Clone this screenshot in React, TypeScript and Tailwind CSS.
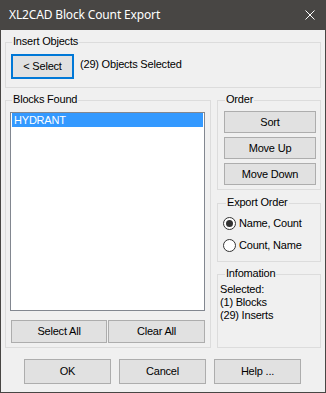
import { ReactNode } from 'react';

interface GroupProps {
  label: string;
  labelLeft: string;
  className: string;
  children?: ReactNode;
}

// Windows-style group box: thin light border with the caption sitting on the top edge
function Group({ label, labelLeft, className, children }: GroupProps) {
  return (
    <div className={`relative border border-[#dcdcdc] ${className}`}>
      <span
        className={`absolute top-[-8px] ${labelLeft} bg-[#f0f0f0] px-[1px] leading-[13px] whitespace-nowrap`}
      >
        {label}
      </span>
      {children}
    </div>
  );
}

interface ButtonProps {
  label: string;
  className: string;
}

function Button({ label, className }: ButtonProps) {
  return (
    <div
      className={`flex items-center justify-center bg-[#e1e1e1] border border-[#adadad] leading-[13px] whitespace-nowrap ${className}`}
    >
      {label}
    </div>
  );
}

function Radio({ label, checked }: { label: string; checked: boolean }) {
  return (
    <div className="flex items-center h-[13px]">
      <div className="w-[13px] h-[13px] rounded-full border border-[#333333] bg-white flex items-center justify-center">
        {checked && <div className="w-[7px] h-[7px] rounded-full bg-[#333333]" />}
      </div>
      <span className="ml-[3px] leading-[13px]">{label}</span>
    </div>
  );
}

export default function App() {
  return (
    <div className="w-[326px] h-[393px] bg-[#f0f0f0] border-x border-b border-[#484644] flex flex-col text-[11px] tracking-[-0.2px] text-black font-['Liberation_Sans',Arial,sans-serif]">
      {/* Title bar */}
      <div className="h-[30px] shrink-0 bg-[#484644] flex items-center justify-between">
        <span className="ml-[8px] text-white text-[12px] tracking-[-0.15px] font-['Noto_Sans',sans-serif]">
          XL2CAD Block Count Export
        </span>
        <svg width="10" height="10" viewBox="0 0 10 10" className="mr-[10px]">
          <path d="M0.5 0.5 L9.5 9.5 M9.5 0.5 L0.5 9.5" stroke="white" strokeWidth="1" />
        </svg>
      </div>

      <div className="flex flex-col px-[4px]">
        {/* Insert Objects */}
        <Group label="Insert Objects" labelLeft="left-[6px]" className="mt-[12px] w-[316px] h-[46px]">
          <div className="flex items-start pl-[5px] pt-[11px]">
            <div className="w-[63px] h-[25px] flex items-center justify-center bg-[#e1e1e1] border-2 border-[#0078d7] leading-[13px]">
              &lt; Select
            </div>
            <span className="ml-[6px] mt-[4px] leading-[13px]">(29) Objects Selected</span>
          </div>
        </Group>

        <div className="flex mt-[12px] gap-[6px]">
          {/* Blocks Found */}
          <Group label="Blocks Found" labelLeft="left-[6px]" className="w-[206px] h-[248px]">
            <div className="flex flex-col pl-[4px] pt-[11px]">
              <div className="w-[195px] h-[199px] border border-[#828790] bg-white">
                <div className="mx-[1px] h-[14px] bg-[#3399ff] text-white pl-[2px] leading-[14px]">
                  HYDRANT
                </div>
              </div>
              <div className="flex gap-[1px] ml-[1px] mt-[9px]">
                <Button label="Select All" className="w-[96px] h-[23px]" />
                <Button label="Clear All" className="w-[97px] h-[23px]" />
              </div>
            </div>
          </Group>

          <div className="flex flex-col w-[104px]">
            {/* Order */}
            <Group label="Order" labelLeft="left-[7px]" className="h-[90px]">
              <div className="flex flex-col gap-[4px] pl-[6px] pt-[10px]">
                <Button label="Sort" className="w-[92px] h-[22px]" />
                <Button label="Move Up" className="w-[92px] h-[22px]" />
                <Button label="Move Down" className="w-[92px] h-[22px]" />
              </div>
            </Group>

            {/* Export Order */}
            <Group label="Export Order" labelLeft="left-[8px]" className="mt-[13px] h-[59px]">
              <div className="flex flex-col gap-[9px] pl-[5px] pt-[13px]">
                <Radio label="Name, Count" checked />
                <Radio label="Count, Name" checked={false} />
              </div>
            </Group>

            {/* Information */}
            <Group label="Infomation" labelLeft="left-[7px]" className="mt-[12px] h-[74px]">
              <div className="flex flex-col pl-[2px] pt-[8px] leading-[13px]">
                <span>Selected:</span>
                <span>(1) Blocks</span>
                <span>(29) Inserts</span>
              </div>
            </Group>
          </div>
        </div>

        {/* Dialog buttons */}
        <div className="flex gap-[8px] mt-[11px] pl-[19px]">
          <Button label="OK" className="w-[87px] h-[25px]" />
          <Button label="Cancel" className="w-[87px] h-[25px]" />
          <Button label="Help ..." className="w-[87px] h-[25px]" />
        </div>
      </div>
    </div>
  );
}
